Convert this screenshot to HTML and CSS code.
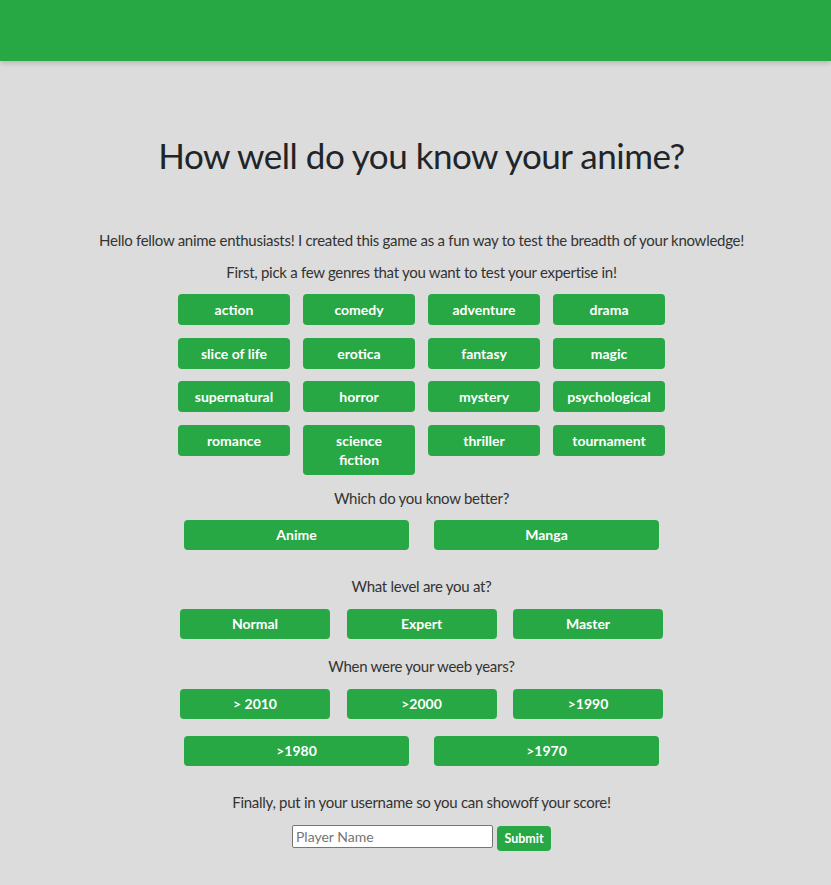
FILE: index.html
```html
<!DOCTYPE html>
<html lang="en">
<head>
<meta charset="utf-8">
<title>How well do you know your anime?</title>
<link rel="stylesheet" href="styles.css">
</head>
<body>
<header class="topbar"></header>
<main class="content">
  <h1 class="title">How well do you know your anime?</h1>
  <p class="intro">Hello fellow anime enthusiasts! I created this game as a fun way to test the breadth of your knowledge!</p>
  <p class="prompt prompt-first">First, pick a few genres that you want to test your expertise in!</p>
  <div class="genres">
    <button class="btn">action</button>
    <button class="btn">comedy</button>
    <button class="btn">adventure</button>
    <button class="btn">drama</button>
    <button class="btn">slice of life</button>
    <button class="btn">erotica</button>
    <button class="btn">fantasy</button>
    <button class="btn">magic</button>
    <button class="btn">supernatural</button>
    <button class="btn">horror</button>
    <button class="btn">mystery</button>
    <button class="btn">psychological</button>
    <button class="btn">romance</button>
    <button class="btn btn-tall">science<br>fiction</button>
    <button class="btn">thriller</button>
    <button class="btn">tournament</button>
  </div>
  <p class="prompt prompt-which">Which do you know better?</p>
  <div class="row row-two">
    <button class="btn btn-wide">Anime</button>
    <button class="btn btn-wide">Manga</button>
  </div>
  <p class="prompt prompt-level">What level are you at?</p>
  <div class="row row-three">
    <button class="btn btn-mid">Normal</button>
    <button class="btn btn-mid">Expert</button>
    <button class="btn btn-mid">Master</button>
  </div>
  <p class="prompt prompt-years">When were your weeb years?</p>
  <div class="row row-three">
    <button class="btn btn-mid">&gt; 2010</button>
    <button class="btn btn-mid">&gt;2000</button>
    <button class="btn btn-mid">&gt;1990</button>
  </div>
  <div class="row row-two row-after">
    <button class="btn btn-wide">&gt;1980</button>
    <button class="btn btn-wide">&gt;1970</button>
  </div>
  <p class="prompt prompt-final">Finally, put in your username so you can showoff your score!</p>
  <form class="player" onsubmit="return false">
    <input class="player-input" type="text" placeholder="Player Name">
    <button class="btn btn-submit" type="submit">Submit</button>
  </form>
</main>
</body>
</html>
```
FILE: styles.css
```css
* { box-sizing: border-box; }
html, body { margin: 0; padding: 0; }
body {
  background: #dbdcdb;
  color: #212529;
  font-family: Lato, "Open Sans", sans-serif;
  min-height: 885px;
}
.topbar {
  height: 61px;
  background: #28a745;
  box-shadow: 0 2px 5px rgba(0,0,0,0.18);
}
.content {
  padding-left: 12px;
  display: flex;
  flex-direction: column;
  align-items: center;
  text-align: center;
}
.title {
  margin: 70px 0 0;
  font-size: 35px;
  letter-spacing: -0.5px;
  font-weight: 400;
  line-height: 48px;
  color: #212529;
}
.prompt, .intro {
  margin: 0;
  font-size: 15px;
  letter-spacing: -0.28px;
  line-height: 24px;
  color: #333;
}
.intro { margin-top: 49px; }
.prompt-first { margin-top: 8px; }
.genres {
  margin-top: 10px;
  display: grid;
  grid-template-columns: repeat(4, 112px);
  column-gap: 13px;
  row-gap: 12.5px;
  align-items: start;
}
.btn {
  background: #28a745;
  color: #fff;
  border: 0;
  border-radius: 4px;
  font-family: inherit;
  font-weight: 700;
  font-size: 14px;
  line-height: 19px;
  height: 31px;
  padding: 0 4px;
}
.btn-tall { height: 50px; }
.prompt-which { margin-top: 11px; }
.row { display: flex; margin-top: 10px; }
.row-two { gap: 25px; }
.row-three { gap: 16.5px; margin-top: 11px; }
.btn-wide { width: 225px; height: 30px; }
.btn-mid { width: 150px; height: 30px; }
.prompt-level { margin-top: 24px; }
.prompt-years { margin-top: 15px; }
.row-after { margin-top: 17px; }
.prompt-final { margin-top: 24px; }
.player {
  margin: 11px 0 0;
  display: flex;
  align-items: flex-start;
  gap: 4px;
}
.player-input {
  width: 201px;
  height: 23px;
  border: 1px solid #767676;
  border-radius: 2px;
  background: #fff;
  font-family: inherit;
  font-size: 14px;
  padding: 0 3px;
  margin-top: 0;
}
.player-input::placeholder { color: #757575; }
.btn-submit {
  width: 54px;
  height: 25px;
  font-size: 12.5px;
  padding: 0;
  margin-top: 1px;
}
```
